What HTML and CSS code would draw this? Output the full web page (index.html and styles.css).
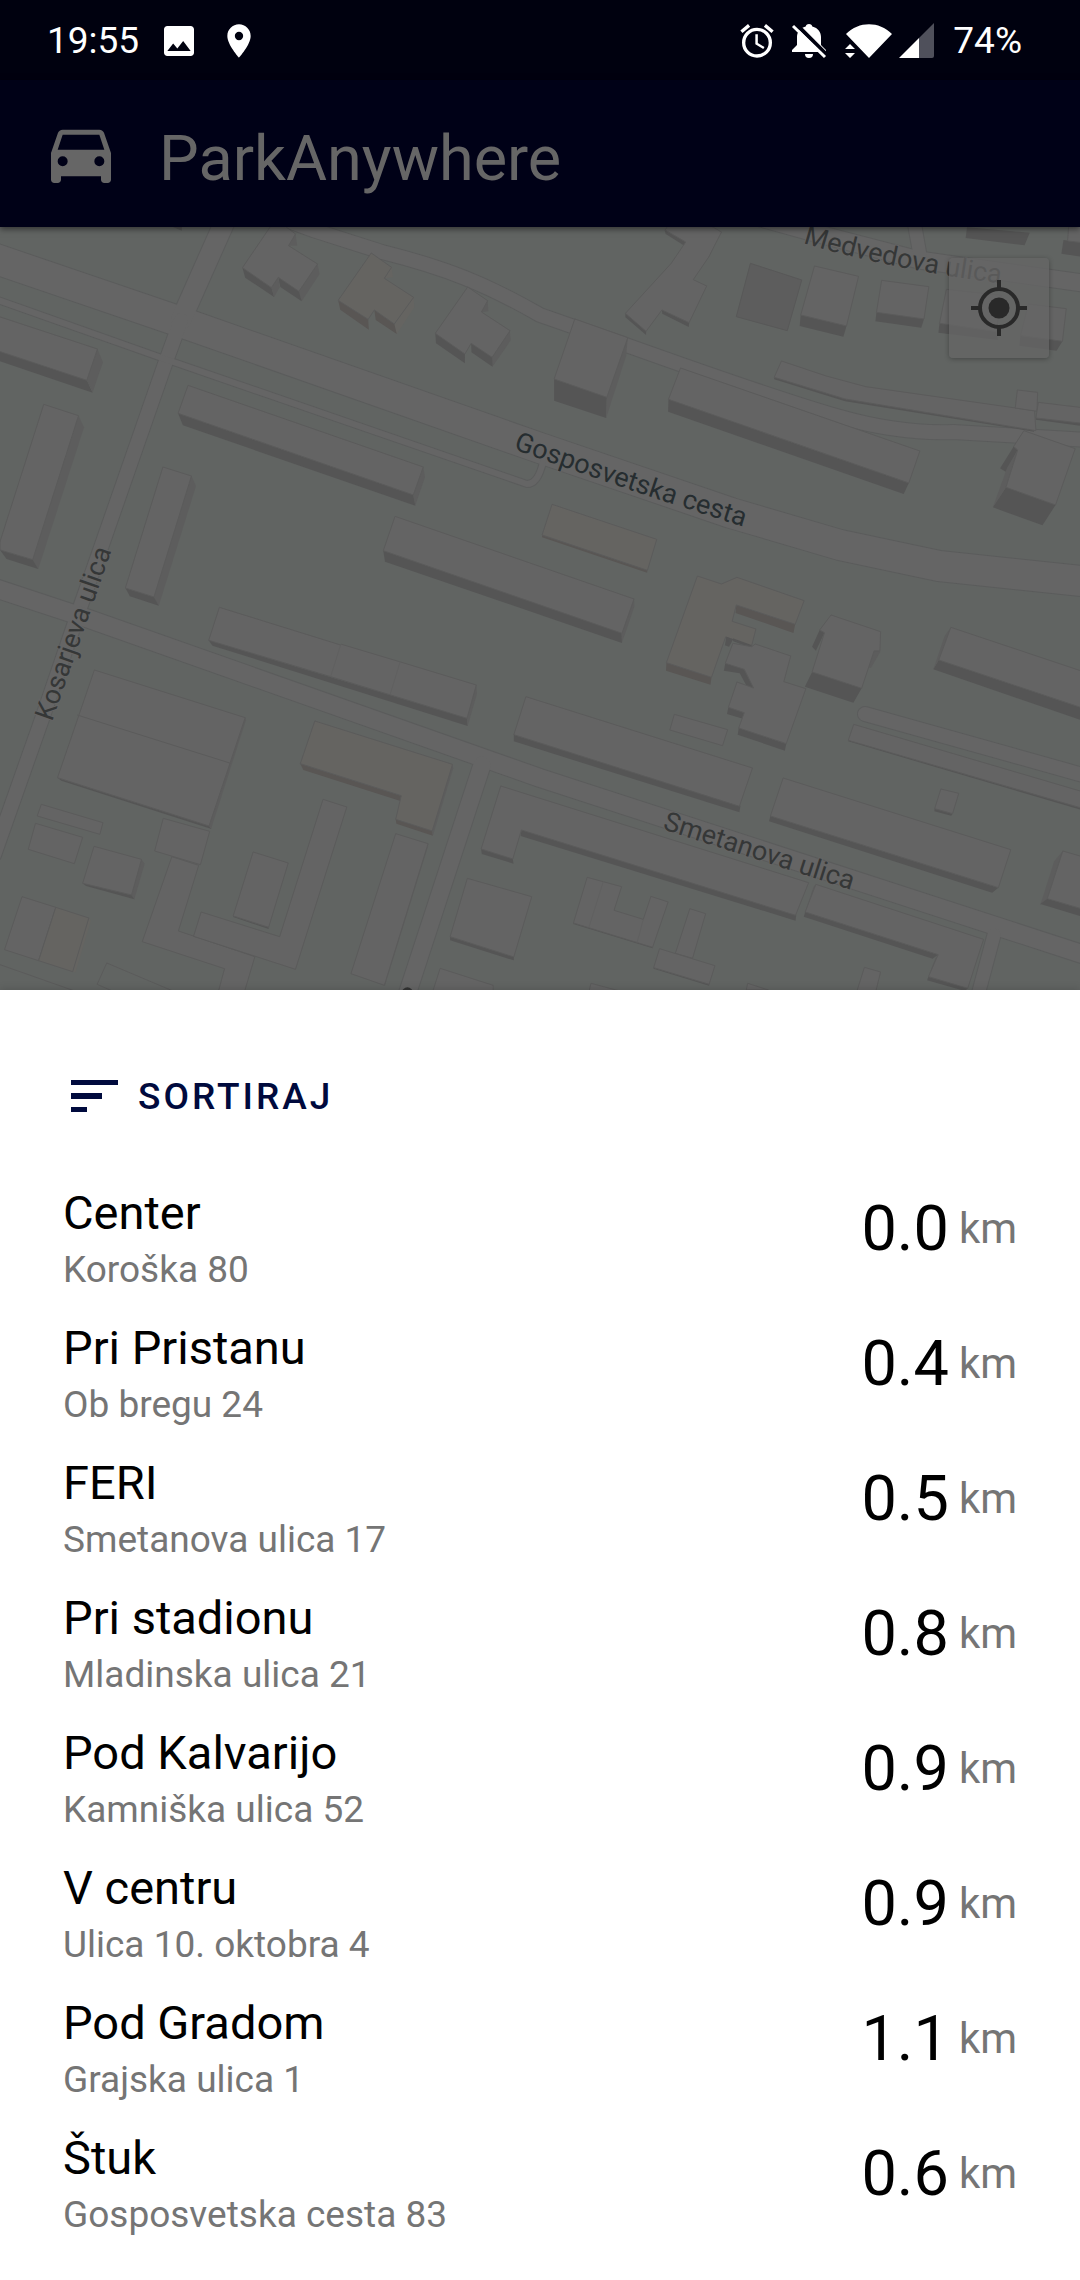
FILE: index.html
```html
<!DOCTYPE html>
<html lang="sl">
<head>
<meta charset="utf-8">
<meta name="viewport" content="width=device-width, initial-scale=1">
<title>ParkAnywhere</title>
<link rel="stylesheet" href="styles.css">
</head>
<body>
<div class="status-bar">
  <div class="status-group">
    <span class="status-text">19:55</span>
    <svg class="status-icon" viewBox="0 0 24 24" aria-hidden="true"><path d="M21 19V5c0-1.1-.9-2-2-2H5c-1.1 0-2 .9-2 2v14c0 1.1.9 2 2 2h14c1.100 0 2-.9 2-2zM8.500 13.500l2.500 3.010L14.500 12l4.500 6H5l3.500-4.500z"/></svg>
    <svg class="status-icon" viewBox="0 0 24 24" aria-hidden="true"><path d="M12 2C8.130 2 5 5.130 5 9c0 5.250 7 13 7 13s7-7.750 7-13c0-3.870-3.130-7-7-7zm0 9.500a2.500 2.500 0 1 1 0-5 2.500 2.500 0 0 1 0 5z"/></svg>
  </div>
  <div class="status-group status-group-end">
    <svg class="status-icon" viewBox="0 0 24 24" aria-hidden="true"><path d="M22 5.720l-4.600-3.860-1.290 1.530 4.600 3.860L22 5.720zM7.880 3.390L6.600 1.860 2 5.710l1.290 1.530 4.590-3.850zM12.500 8H11v6l4.750 2.850.75-1.230-4-2.370V8zM12 4a9 9 0 1 0 0 18 9 9 0 0 0 0-18zm0 16a7 7 0 1 1 0-14 7 7 0 0 1 0 14z"/></svg>
    <svg class="bell-icon" viewBox="0 0 36 36" aria-hidden="true">
      <path d="M18 1c2 0 3 1 3.300 2.500C27 5 30 9 30 14v8l5 5v2H1v-2l5-5v-8C6 9 9 5 14.700 3.500 15 2 16 1 18 1zM14 31h8a4 4 0 0 1-8 0z"/>
      <path class="bell-gap" d="M4 0l32 32"/><path class="bell-slash" d="M2 3l32 31"/>
    </svg>
    <svg class="wifi-icon" viewBox="0 0 48 36" aria-hidden="true"><path d="M24 35L1 11C14-2 34-2 47 11zM5 21l5 5H0zM5 35l5-5H0z"/></svg>
    <svg class="signal-icon" viewBox="0 0 36 36" aria-hidden="true"><path class="signal-off" d="M20 15L35 0v33q0 2-2 2H20z"/><path d="M0 35l20-20v20z"/></svg>
    <span class="status-text">74%</span>
  </div>
</div>

<header class="app-bar">
  <svg class="car-icon" viewBox="0 0 24 24" aria-hidden="true"><path d="M18.920 6.010C18.720 5.420 18.160 5 17.500 5h-11c-.66 0-1.210.42-1.420 1.010L3 12v8c0 .55.45 1 1 1h1c.55 0 1-.45 1-1v-1h12v1c0 .55.45 1 1 1h1c.55 0 1-.45 1-1v-8zM6.500 16a1.500 1.500 0 1 1 0-3 1.500 1.500 0 0 1 0 3zm11 0a1.500 1.500 0 1 1 0-3 1.500 1.500 0 0 1 0 3zM5 11l1.500-4.500h11L19 11H5z"/></svg>
  <h1 class="app-title">ParkAnywhere</h1>
</header>

<section class="map" aria-label="Zemljevid">
  <svg class="map-canvas" viewBox="0 0 1080 763" preserveAspectRatio="xMidYMid slice">
    <defs>
      <g id="roads">
        <path class="w-34" d="M-10 257L175 320 540 448 731 513 840 545 939 566 1090 582"/>
        <path class="w-23" d="M229 212L181 320"/>
        <path class="w-15" d="M181 320L165 364 81 605 42 719-6 855"/>
        <path class="w-7" d="M-5 299L159 357 527 484Q538 484 543 462"/>
        <path class="w-20" d="M-5 588L89 619 540 778 1085 955"/>
        <path class="w-18" d="M482 765L402 1010"/>
        <path class="w-13" d="M994 935L974 1010"/>
        <path class="w-15" d="M280 218L313 230 382 252 Q430 264 465 278T540 315L626 345 Q780 400 840 417T953 432L1090 440"/>
        <path class="w-18" d="M750 215L815 233 919 260 1090 284"/>
        <path class="w-13" d="M912 210L920 255"/>
        <path class="w-15" d="M865 714L1090 777"/>
      </g>
      <path id="gosposvetska" d="M513 449Q620 488 760 532"/>
      <path id="medvedova" d="M803 243Q890 270 1020 286"/>
      <path id="smetanova" d="M662 829L870 896"/>
      <path id="kosarjeva" d="M52 722L118 532"/>
    </defs>
    <g transform="translate(0 -227)">
      <use href="#roads" class="road-case"/>
      <use href="#roads" class="road-fill"/>
    </g>

    <!-- north-west blocks -->
    <g class="blocks" transform="translate(0 -7) scale(.34439 .33333)">
      <path class="wall" d="M500 20h28v12z"/>
      <path class="side" d="M858 42l5 35-25 0zM922 132l6 30-52 82-8-30z"/>
      <path class="wall" d="M704 143l84 60 8 28-84-58zM808 172l60 42 8 30-62-43z"/>
      <path class="side" d="M788 203l20-31 4 30-16 29z"/>
      <path class="roof" d="M785 20h45l28 22-20 35 84 55-54 82-60-42-20 31-84-60z"/>
      <path class="side tan" d="M1137 142l4 30-25 3zM1201 232l2 30-51 80-8-28z"/>
      <path class="wall tan-wall" d="M982 241l87 57 2 31-83-60zM1087 270l58 42 7 30-61-42z"/>
      <path class="roof tan" d="M1078 99l59 43-21 33 85 57-56 80-58-42-18 28-87-57z"/>
      <path class="side" d="M1416 240l2 34-20 2zM1480 331l3 30-53 79-5-28z"/>
      <path class="wall" d="M1264 340l86 62v28l-84-60zM1368 370l61 42 1 28-61-43z"/>
      <path class="roof" d="M1358 201l58 41-18 34 83 56-52 80-61-42-18 32-86-62z"/>
      <path class="wall" d="M-5 393l257 88 17 37L-5 422z"/>
      <path class="side" d="M283 387l16 40-30 90-17-36z"/>
      <path class="roof" d="M-5 289l288 98-31 94L-5 393z"/>
      <path class="side" d="M228 587l16 35-133 425-16-28z"/>
      <path class="wall" d="M0 990l95 29 16 28-92-30z"/>
      <path class="roof" d="M127 553l101 34L95 1019 0 990v-25z"/>
      <path class="side" d="M556 768l13 30-108 359-14-27z"/>
      <path class="wall" d="M364 1104l83 27 14 26-84-28z"/>
      <path class="roof" d="M473 741l83 27-109 363-83-27z"/>
      <path class="wall" d="M517 580l683 245 6 32L531 616z"/>
      <path class="side" d="M1229 741l5 30-28 86-6-32z"/>
      <path class="roof" d="M546 496l683 245-29 84-683-245z"/>
      <path class="wall" d="M1113 992l693 247 0 30-688-244z"/>
      <path class="side" d="M1841 1136l1 24-36 108-2-28z"/>
      <path class="roof" d="M1147 889l694 248-35 103-693-248z"/>
    </g>

    <!-- north-east blocks -->
    <g class="blocks" transform="translate(540 -7) scale(.34439 .33333)">
      <path class="wall" d="M362 30l61 36-6 10-52-34zM248 280l60 54v11l-60-53zM354 270l79 38-1 13-77-40z"/>
      <path class="roof" d="M370 20h130l27 16-37 75-45 68 39 19-51 110-79-38-46 64-60-54 133-150 42-64-60-36z"/>
      <path class="side outlined" d="M611 130l149 50-42 152-148-42z"/>
      <path class="wall" d="M757 285l133 33-9 32-127-32z"/>
      <path class="roof" d="M797 138l128 31-35 149-133-33z"/>
      <path class="wall" d="M977 277l138 20-8 26-133-19z"/>
      <path class="roof" d="M992 181l137 19-14 97-138-20z"/>
      <path class="wall" d="M1160 310l165 25 5 25-173-22z"/>
      <path class="roof" d="M1180 208l160 18-15 109-165-25z"/>
      <path class="wall" d="M1395 347l122 17-17 28-108-15z"/>
      <path class="roof" d="M1418 252l110 14-11 98-122-17z"/>
      <path class="wall" d="M1240 22l182 16-15 38-171-22z"/>
      <path class="wall" d="M1520 60l50 8v42l-56-9z"/>
      <path class="roof" d="M1535 20h40v48l-43-5z"/>
      <path class="wall" d="M41 477l153 55-2 62-151-52z"/>
      <path class="side" d="M255 353l-5 55-58 186 2-62z"/>
      <path class="roof" d="M101 297l154 56-61 179-153-55z"/>
      <path class="wall" d="M373 538l698 251-15 33L372 575z"/>
      <path class="roof" d="M408 444l695 249-32 96-698-251z"/>
      <path class="wall" d="M680 472l206 65 550 94-2 4-548-91L680 478z"/>
      <path class="roof" d="M701 423l130 45 115 32 490 72 4 60-554-95-206-65z"/>
      <path class="roof" d="M1386 510l59 7-2 57-63-10z"/>
      <path class="wall" d="M1440 594l135 16v8l-135-19z"/>
      <path class="roof" d="M1447 547l128 16v47l-135-16z"/>
      <path class="wall" d="M1375 680l12 10-35 65-16-10zM1353 802l144 53-38 61-144-54z"/>
      <path class="side" d="M1387 690l-34 112-38 60 42-120z"/>
      <path class="roof" d="M1405 632l149 54-57 169-144-53 34-112-12-10z"/>
      <path class="wall tan-wall" d="M6 945l306 106-1 7L6 952z"/>
      <path class="roof tan" d="M35 853l304 105-27 93L6 945z"/>
    </g>

    <!-- south-west blocks -->
    <g class="blocks" transform="translate(0 373) scale(.34439 .33333)">
      <path class="wall" d="M606 121l750 234 2 23L617 137z"/>
      <path class="side" d="M1383 255l2 26-27 97-2-23z"/>
      <path class="roof" d="M637 22l352 113 3-2 168 52 223 70-27 100-396-125-354-109z"/>
      <path class="line" d="M989 135l-29 95M1162 185l-29 98"/>
      <path class="wall" d="M167 533l440 145 7 9-436-145z"/>
      <path class="side" d="M712 353l2 8-101 325-6-8z"/>
      <path class="roof" d="M274 210l438 143-105 325-440-145z"/>
      <path class="edge" d="M224 345l443 144"/>
      <path class="wall tan-wall" d="M872 491l293 96v17L881 510zM1149 658l106 35 2 14-106-36z"/>
      <path class="side" d="M1314 493l2 12-59 202-2-14z"/>
      <path class="roof tan" d="M914 363l400 130-59 200-106-35 16-71-293-96z"/>
      <path class="roof" d="M120 613l179 55-9 35-182-55zM103 670l137 42-24 79-134-43z"/>
      <path class="side" d="M411 778l9 13-30 107-8-13z"/>
      <path class="wall" d="M240 850l142 36 8 12-140-40z"/>
      <path class="roof" d="M273 739l138 39-29 107-142-35z"/>
      <path class="roof" d="M499 770l78 26-59 197 222 77-30 105h-76l18-69-239-81z"/>
      <path class="roof" d="M474 655l135 39-27 100-133-41z"/>
      <path class="roof" d="M938 598l69 23-149 487-296-99 22-73 228 74z"/>
      <path class="wall" d="M677 948l103 34v5l-103-36z"/>
      <path class="roof" d="M735 756l102 33-57 193-103-34z"/>
      <path class="side" d="M1243 731v8l-126 420-2-4z"/>
      <path class="roof" d="M1149 701l94 30-127 425-97-35z"/>
      <path class="side tan" d="M258 954l6 8-45 155-8-2z"/>
      <path class="roof" d="M64 890l98 32-50 160-99-33z"/>
      <path class="roof tan" d="M162 922l96 32-47 161-99-33z"/>
      <path class="edge" d="M0 1094l220 80M500 1172L310 1089l-28 64 40 18"/>
      <path class="wall" d="M1397 747l92 30 2 14-92-29z"/>
      <path class="wall" d="M1514 690l798 254-2 18-798-254z"/>
      <path class="roof" d="M1454 558l894 290-38 98-796-256-25 87-92-30z"/>
      <path class="wall" d="M1307 1010l185 61v10l-185-60z"/>
      <path class="roof" d="M1357 835l187 55-52 181-185-61z"/>
      <path class="roof" d="M1278 1105l154 51v20h-176z"/>
      <path class="wall" d="M1492 404l658 213-3 20-655-213z"/>
      <path class="roof" d="M1527 290l658 214-38 115-655-215z"/>
      <circle class="poi" cx="1183" cy="1178" r="16"/>
    </g>

    <!-- south-east blocks -->
    <g class="blocks" transform="translate(540 373) scale(.34439 .33333)">
      <path class="wall tan-wall" d="M367 188l131 44-3 22-129-42zM570 15l171 58-5 26-168-60z"/>
      <path class="roof tan" d="M457-72l70 24 45-20 195 70-26 71-171-58-12 49 69 23-13 52-75-28-41 121-131-44z"/>
      <path class="wall" d="M541 110l20 8-12 22-12-4zM560 115l54 20-2 8-51-19z"/>
      <path class="wall" d="M538 190l55 18 27 56-20-6-20-38-46-8zM547 322l46 16-4 18-46-14zM577 384l138 47-4 21-137-48z"/>
      <path class="roof" d="M560 130l55 10 10-8 103 36-20 77 64 21-57 165-138-47 16-46-46-16 25-76 48 18-27-56-55-18z"/>
      <path class="wall" d="M812 90l14 8-25 54-11-12zM790 216l144 49-24 43-141-48z"/>
      <path class="side" d="M971 152l18 2-28 50-8-3z"/>
      <path class="roof" d="M845 45l144 50-2 58-17 0-36 112-144-49 36-118-14-8z"/>
      <path class="wall" d="M1158 180l420 145v38l-436-155z"/>
      <path class="side" d="M1193 82l-35 98-16 28 33-100z"/>
      <path class="roof" d="M1193 82l385 133v110l-420-145z"/>
      <path class="roof" d="M390 343l155 46-15 48-153-47z"/>
      <path class="wall" d="M895 421l680 202v8L895 424z"/>
      <path class="roof" d="M911 373l664 202v50L895 421z"/>
      <path class="wall" d="M1146 626l52 15-4 6-49-13z"/>
      <path class="roof" d="M1164 567l52 13-18 61-52-15z"/>
      <path class="wall" d="M669 648l662 215-18 15L665 664z"/>
      <path class="roof" d="M706 534l661 215-36 114-662-215z"/>
      <path class="side" d="M1518 753l-45 143-20 18 40-130z"/>
      <path class="wall" d="M1473 896l102 32v22l-122-38z"/>
      <path class="roof" d="M1518 753l60 18v157l-105-32z"/>
      <path class="wall" d="M770 936l386 128-16 12-374-126zM1128 1130l114 35-8 8-110-32z"/>
      <path class="side" d="M801 853l-31 83-4 14 28-90zM1156 1064l-28 66-4 10 24-66z"/>
      <path class="roof" d="M801 853l487 165-46 147-114-35 28-66-386-128z"/>
      <path class="wall" d="M97 969l230 72v4L97 972z"/>
      <path class="roof" d="M137 832l100 28-22 71 85 27 22-69 50 17-45 136-230-73z"/>
      <path class="line" d="M184 844l-42 138M300 958l-18 70"/>
      <path class="roof" d="M435 926l46 15-38 134-50-15z"/>
      <path class="wall" d="M330 1103l161 50v4l-161-51z"/>
      <path class="roof" d="M347 1046l161 51-17 56-161-50z"/>
      <path class="roof" d="M942 1102l47 14-14 58h-55zM148 1150l80 22h-85zM603 1150l60 20h-64z"/>
    </g>

    <g class="street-names">
      <g transform="translate(0 -227)">
        <text class="main-street"><textPath href="#gosposvetska">Gosposvetska cesta</textPath></text>
        <text><textPath href="#medvedova">Medvedova ulica</textPath></text>
        <text><textPath href="#smetanova">Smetanova ulica</textPath></text>
        <text><textPath href="#kosarjeva">Kosarjeva ulica</textPath></text>
      </g>
    </g>
  </svg>
  <button class="locate" type="button" aria-label="Moja lokacija">
    <svg class="locate-icon" viewBox="0 0 56 56" aria-hidden="true"><circle class="ring" cx="28" cy="28" r="19"/><circle cx="28" cy="28" r="10.500"/><path class="ring" d="M28 0v9M28 47v9M0 28h9M47 28h9"/></svg>
  </button>
</section>

<main class="sheet">
  <button class="sort" type="button">
    <svg class="sort-icon" viewBox="0 0 47 32" aria-hidden="true"><path d="M0 0h47v5H0zM0 13h31v6H0zM0 27h16v5H0z"/></svg>
    SORTIRAJ
  </button>
  <ul class="places">
    <li class="place"><div><div class="name">Center</div><div class="address">Koroška 80</div></div><div class="distance"><span class="value">0.0</span><span class="unit">km</span></div></li>
    <li class="place"><div><div class="name">Pri Pristanu</div><div class="address">Ob bregu 24</div></div><div class="distance"><span class="value">0.4</span><span class="unit">km</span></div></li>
    <li class="place"><div><div class="name">FERI</div><div class="address">Smetanova ulica 17</div></div><div class="distance"><span class="value">0.5</span><span class="unit">km</span></div></li>
    <li class="place"><div><div class="name">Pri stadionu</div><div class="address">Mladinska ulica 21</div></div><div class="distance"><span class="value">0.8</span><span class="unit">km</span></div></li>
    <li class="place"><div><div class="name">Pod Kalvarijo</div><div class="address">Kamniška ulica 52</div></div><div class="distance"><span class="value">0.9</span><span class="unit">km</span></div></li>
    <li class="place"><div><div class="name">V centru</div><div class="address">Ulica 10. oktobra 4</div></div><div class="distance"><span class="value">0.9</span><span class="unit">km</span></div></li>
    <li class="place"><div><div class="name">Pod Gradom</div><div class="address">Grajska ulica 1</div></div><div class="distance"><span class="value">1.1</span><span class="unit">km</span></div></li>
    <li class="place"><div><div class="name">Štuk</div><div class="address">Gosposvetska cesta 83</div></div><div class="distance"><span class="value">0.6</span><span class="unit">km</span></div></li>
  </ul>
</main>
</body>
</html>
```
FILE: styles.css
```css
* {
  box-sizing: border-box;
}

body {
  margin: 0;
  background: #fff;
  color: #000;
  font-family: Roboto, "Liberation Sans", sans-serif;
}

button {
  border: 0;
  padding: 0;
  font: inherit;
  cursor: pointer;
}

svg {
  display: block;
  flex: none;
}

/* Status bar */
.status-bar {
  display: flex;
  justify-content: space-between;
  align-items: center;
  height: 80px;
  padding: 2px 58px 0 47px;
  background: #00010f;
  color: #fff;
  fill: #fff;
}

.status-group {
  display: flex;
  align-items: center;
  gap: 20px;
}

.status-group-end {
  gap: 14px;
}

.status-text {
  font-size: 37px;
  line-height: 44px;
}

.status-group-end .status-text {
  margin-left: 4px;
}

.status-icon {
  width: 40px;
  height: 40px;
}

.bell-icon,
.signal-icon {
  width: 36px;
  height: 36px;
}

.signal-icon {
  margin-left: -8px;
}

.wifi-icon {
  width: 48px;
  height: 36px;
  margin-left: 4px;
}

.bell-gap {
  stroke: #00010f;
  stroke-width: 4px;
}

.bell-slash {
  stroke: #fff;
  stroke-width: 3px;
}

.signal-off {
  fill: #4f505b;
}

/* App bar */
.app-bar {
  position: relative;
  z-index: 1;
  display: flex;
  align-items: flex-start;
  gap: 38px;
  height: 147px;
  padding: 33px 42px 0 41px;
  background: #000117;
  box-shadow: 0 2px 6px rgba(0, 0, 0, .5);
  color: #666;
  fill: #666;
}

.car-icon {
  width: 80px;
  height: 80px;
}

.app-title {
  margin: 0;
  font-size: 63px;
  font-weight: 400;
  line-height: 92px;
}

/* Map */
.map {
  position: relative;
  background: #616462;
}

.map-canvas {
  width: 100%;
  height: auto;
}

.road-case {
  fill: none;
  stroke: #5b5c5c;
  stroke-linecap: round;
  stroke-linejoin: round;
  --casing: 2px;
}

.road-fill {
  fill: none;
  stroke: #656565;
  stroke-linecap: round;
  stroke-linejoin: round;
  --casing: 0px;
}

.w-7 { stroke-width: calc(6px + var(--casing)); }
.w-13 { stroke-width: calc(13px + var(--casing)); }
.w-15 { stroke-width: calc(14px + var(--casing)); }
.w-18 { stroke-width: calc(17px + var(--casing)); }
.w-20 { stroke-width: calc(18px + var(--casing)); }
.w-23 { stroke-width: calc(20px + var(--casing)); }
.w-34 { stroke-width: calc(30px + var(--casing)); }

.blocks path {
  vector-effect: non-scaling-stroke;
}

.roof {
  fill: #646464;
  stroke: #5b5b5b;
  stroke-width: 1px;
}

.wall {
  fill: #555;
}

.side {
  fill: #5d5d5d;
}

.outlined {
  stroke: #585858;
}

.tan {
  fill: #656461;
}

.tan-wall {
  fill: #595654;
}

.edge,
.line {
  fill: none;
  stroke: #5b5b5b;
  stroke-width: 1px;
}

.line {
  stroke: #606060;
}

.poi {
  fill: #333;
}

.street-names {
  fill: #353737;
  stroke: #656565;
  stroke-width: 2px;
  paint-order: stroke;
  font-size: 27px;
}

.main-street {
  fill: #262d30;
}

.locate {
  position: absolute;
  top: 31px;
  right: 31px;
  display: grid;
  place-items: center;
  width: 100px;
  height: 100px;
  border-radius: 4px;
  background: rgba(102, 102, 102, .75);
  box-shadow: 0 1px 5px rgba(0, 0, 0, .3);
  fill: #292929;
}

.locate-icon {
  width: 56px;
  height: 56px;
}

.ring {
  fill: none;
  stroke: #292929;
  stroke-width: 4px;
}

/* Sheet with the list of car parks */
.sheet {
  position: relative;
  padding: 60px 63px 30px;
  background: #fff;
  box-shadow: 0 -1px 8px rgba(0, 0, 0, .15);
}

.sort {
  display: flex;
  align-items: center;
  gap: 20px;
  height: 92px;
  padding: 0 8px;
  background: none;
  color: #000a3d;
  fill: #000a3d;
  font-size: 37px;
  font-weight: 500;
  letter-spacing: 3px;
}

.sort-icon {
  width: 47px;
  height: 32px;
}

.places {
  margin: 29px 0 0;
  padding: 0;
  list-style: none;
}

.place {
  display: flex;
  justify-content: space-between;
  align-items: flex-start;
  padding: 14px 0 14px;
}

.name {
  margin-bottom: 7px;
  font-size: 47px;
  line-height: 56px;
}

.address {
  color: #757575;
  font-size: 37px;
  line-height: 44px;
}

.distance {
  display: flex;
  align-items: center;
  gap: 10px;
  line-height: 88px;
}

.value {
  font-size: 63px;
}

.unit {
  color: #757575;
  font-size: 42px;
}
```
